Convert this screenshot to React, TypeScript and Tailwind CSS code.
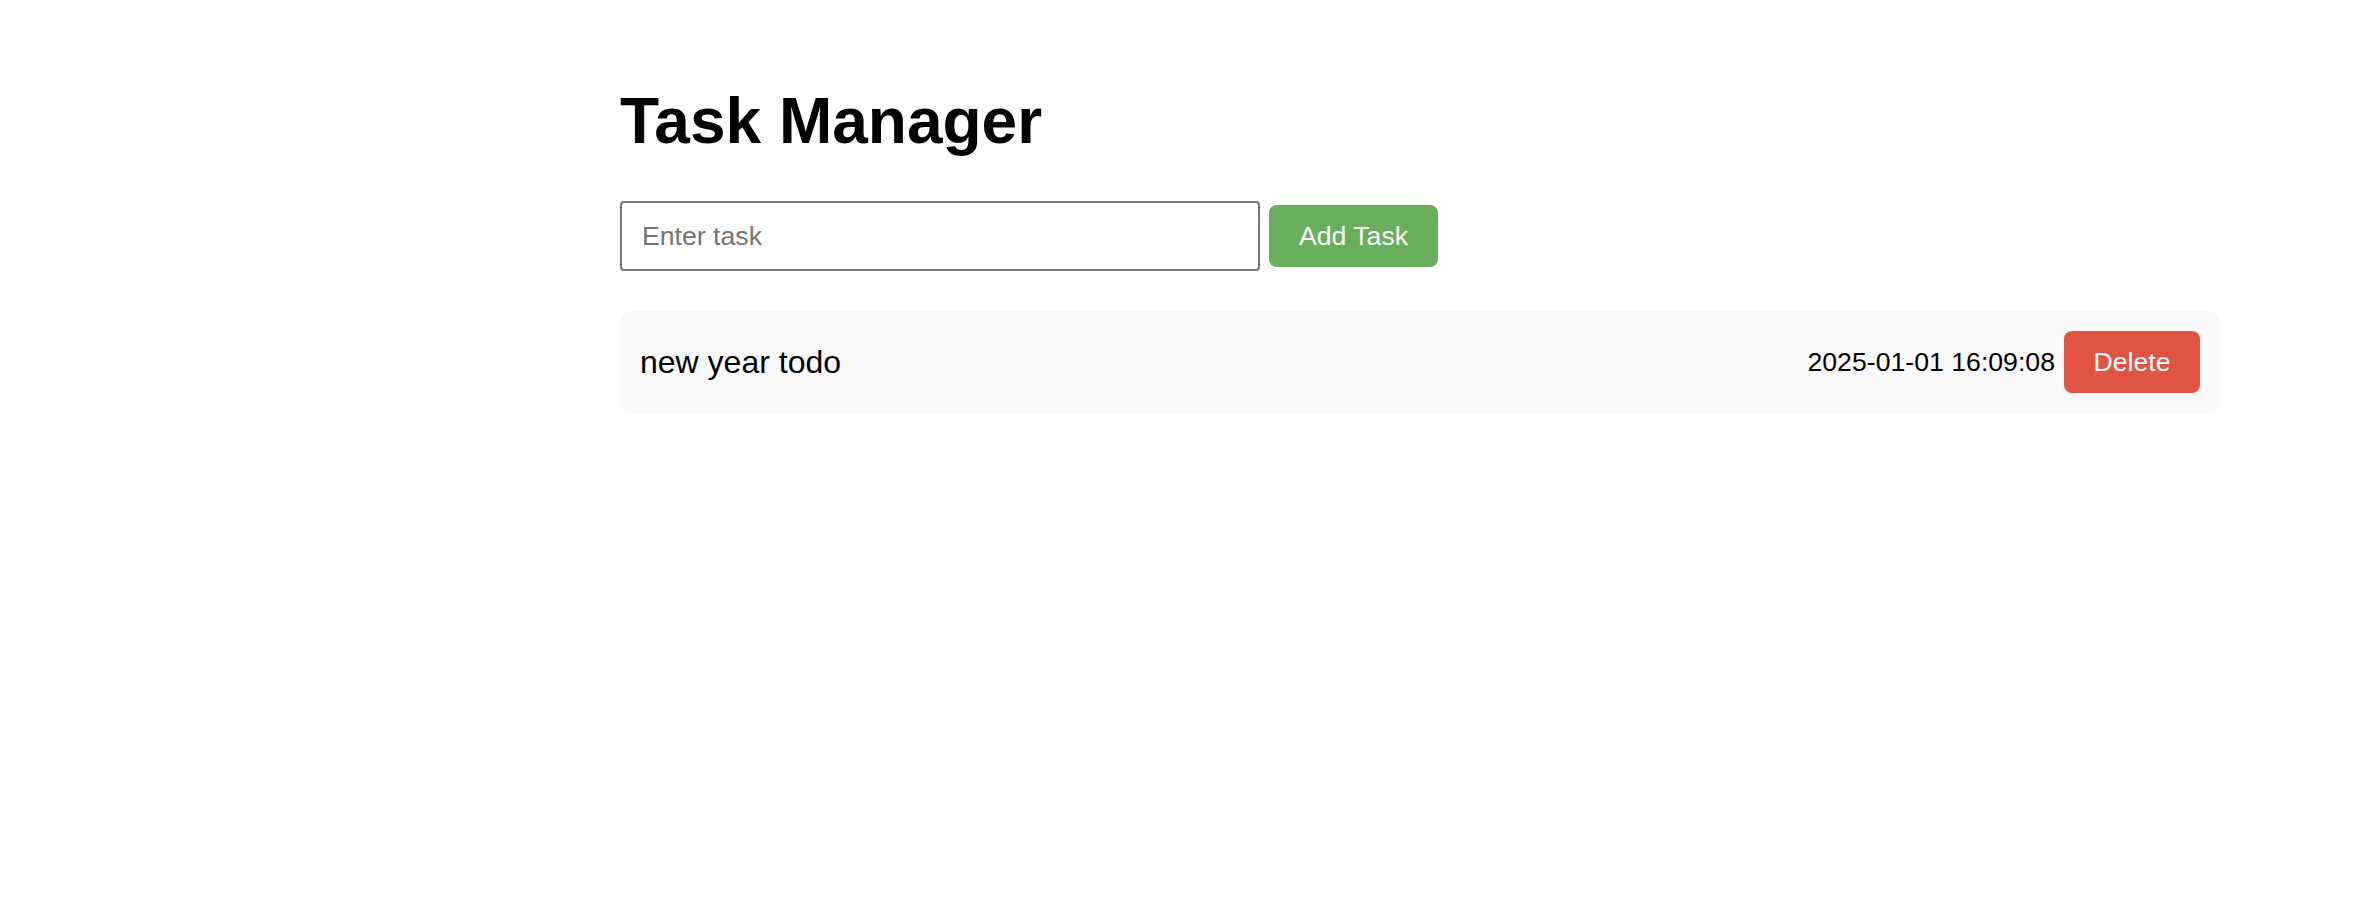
import React from "react";

export default function App() {
  return (
    <div
      className="min-h-[902px] w-full bg-white pl-[620px] pt-[84px] text-black"
      style={{ fontFamily: '"Liberation Sans", Arial, sans-serif' }}
    >
      <div className="w-[1600px]">
        <h1 className="mb-[43px] text-[64px] font-bold leading-[74px]">Task Manager</h1>
        <div className="flex items-center">
          <input
            type="text"
            placeholder="Enter task"
            className="box-border h-[70px] w-[640px] rounded-[4px] border-2 border-[#767676] bg-white px-[20px] text-[26.67px] leading-[30px] text-black outline-none placeholder:text-[#757575]"
          />
          <button className="ml-[9px] h-[62px] w-[169px] rounded-[8px] bg-[#68ae5c] text-[26.67px] leading-[30px] text-white">
            Add Task
          </button>
        </div>
        <div className="mt-[40px] flex h-[102px] items-center rounded-[10px] bg-[#f9f9f9] pl-[20px] pr-[20px]">
          <span className="flex-1 text-[32px] leading-[37px]">new year todo</span>
          <span className="mr-[9px] text-[26.67px] leading-[30px]">2025-01-01 16:09:08</span>
          <button className="h-[62px] w-[136px] rounded-[8px] bg-[#e15443] text-[26.67px] leading-[30px] text-white">
            Delete
          </button>
        </div>
      </div>
    </div>
  );
}
